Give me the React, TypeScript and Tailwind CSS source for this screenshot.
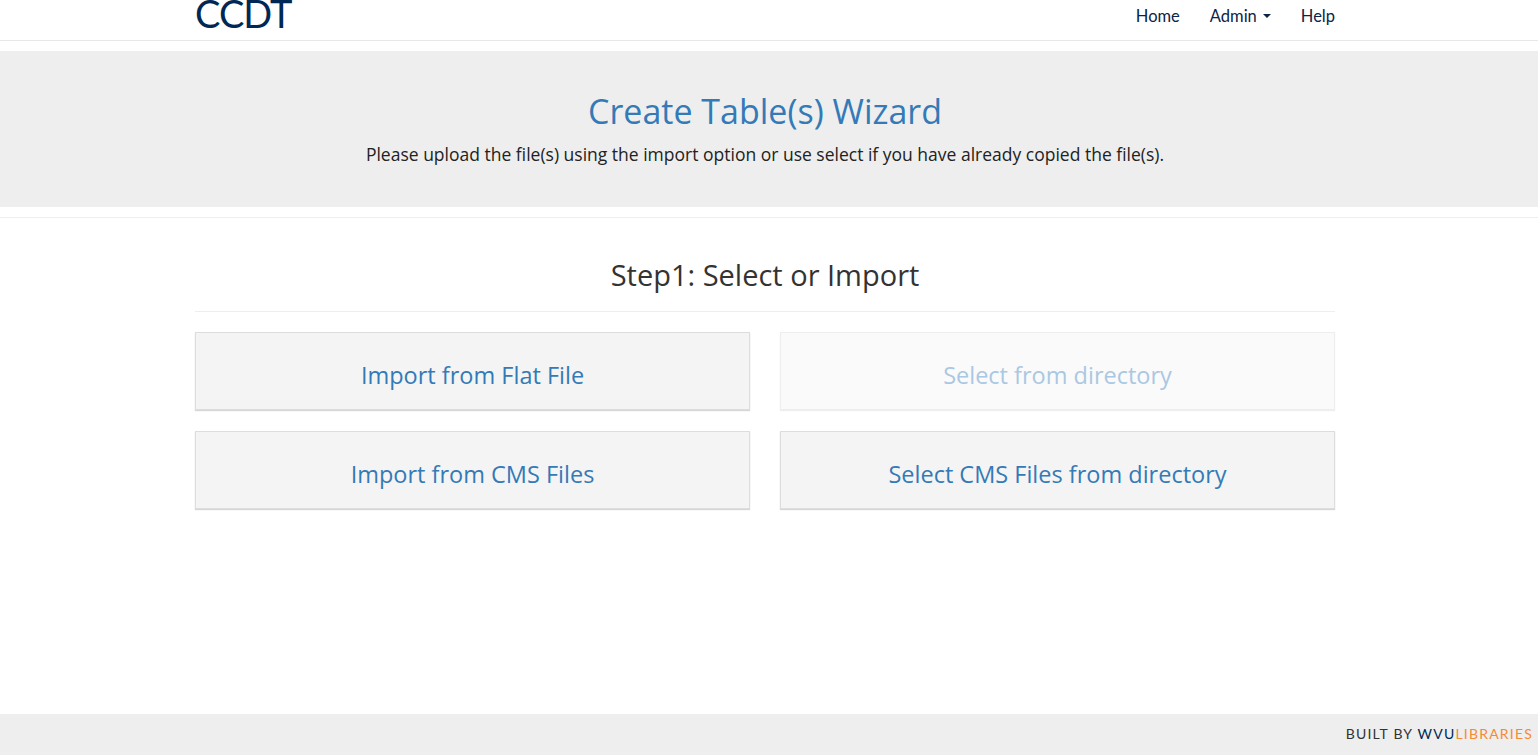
import React from "react";

// Step 1 options of the wizard
const options = [
  { label: "Import from Flat File", disabled: false },
  { label: "Select from directory", disabled: true },
  { label: "Import from CMS Files", disabled: false },
  { label: "Select CMS Files from directory", disabled: false },
];

const muli = { fontFamily: "Lato, 'Open Sans', sans-serif" };

export default function App() {
  return (
    <div className="min-h-screen flex flex-col bg-white" style={muli}>
      {/* navbar */}
      <nav className="h-[41px] border-b border-[#e7e7e7] pr-[8px]">
        <div className="w-[1140px] mx-auto flex items-start justify-between">
          <a className="text-[38px] leading-[30px] text-[#002855] -mt-[2px] tracking-tight">CCDT</a>
          <ul className="flex items-center gap-[30px] text-[16.5px] text-[#0b2447] pt-[4px]">
            <li>Home</li>
            <li className="flex items-center gap-[6px]">
              Admin
              <span className="inline-block w-0 h-0 border-x-[4px] border-x-transparent border-t-[4px] border-t-[#0b2447]" />
            </li>
            <li>Help</li>
          </ul>
        </div>
      </nav>

      {/* jumbotron */}
      <header className="mt-[10px] h-[156px] bg-[#eeeeee] flex flex-col items-center pt-[38px] pr-[8px]">
        <h1 className="text-[34px] leading-[44px] text-[#337ab7]" style={{ fontFamily: "'Open Sans', sans-serif" }}>
          Create Table(s) Wizard
        </h1>
        <p className="mt-[8px] text-[17.5px] text-[#222]" style={{ fontFamily: "'Open Sans', sans-serif" }}>
          Please upload the file(s) using the import option or use select if you have already copied the file(s).
        </p>
      </header>
      <div className="mt-[10px] border-t border-[#eeeeee]" />

      {/* step 1 */}
      <div className="flex-1 pr-[8px]">
        <main className="w-[1140px] mx-auto" style={{ fontFamily: "'Open Sans', sans-serif" }}>
          <h2 className="mt-[37px] text-center text-[29px] leading-[40px] text-[#333] pb-[16px] border-b border-[#eeeeee]">
            Step1: Select or Import
          </h2>
          <div className="mt-[20px] grid grid-cols-2 gap-x-[30px] gap-y-[21px]">
            {options.map((o) => (
              <button
                key={o.label}
                className={
                  o.disabled
                    ? "h-[78px] pt-[10px] bg-[#fafafa] border border-[#eeeeee] shadow-[0_1px_1px_#eeeeee] text-[23.5px] text-[#aac8e2]"
                    : "h-[78px] pt-[10px] bg-[#f4f4f4] border border-[#dddddd] shadow-[0_1px_1px_#d6d6d6] text-[23.5px] text-[#337ab7]"
                }
              >
                {o.label}
              </button>
            ))}
          </div>
        </main>
      </div>

      {/* footer */}
      <footer className="h-[41px] bg-[#eeeeee] flex items-center justify-end pr-[5px] pb-[2px] text-[14px] tracking-[1.2px]">
        <span className="text-[#333]">BUILT BY&nbsp;</span>
        <span className="text-[#002855]">WVU</span>
        <span className="text-[#f58a34]">LIBRARIES</span>
      </footer>
    </div>
  );
}
